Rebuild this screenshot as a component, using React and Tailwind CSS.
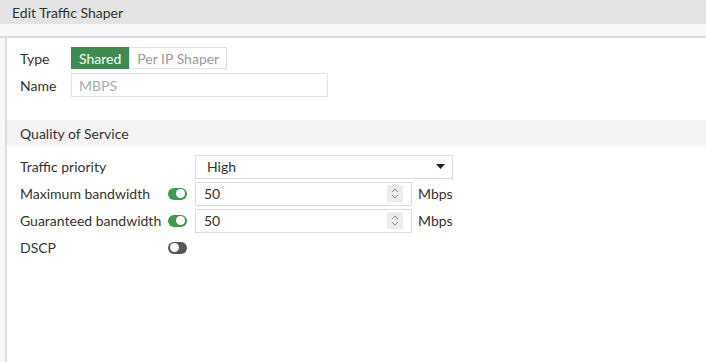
import React from 'react'

function Toggle({ on }) {
  return (
    <div
      className={`w-[19px] h-[12px] rounded-full flex items-center px-[2px] ${
        on ? 'bg-[#3d9a4e] justify-end' : 'bg-[#555] justify-start'
      }`}
    >
      <div className="w-[9px] h-[9px] rounded-full bg-white" />
    </div>
  )
}

function Spinner() {
  return (
    <div className="w-[16px] h-[17px] bg-[#ececec] flex items-center justify-center">
      <svg width="8" height="13" viewBox="0 0 8 13" fill="none" stroke="#8a8a8a" strokeWidth="1">
        <path d="M1 5 L4 2 L7 5" />
        <path d="M1 8 L4 11 L7 8" />
      </svg>
    </div>
  )
}

function BandwidthRow({ label }) {
  return (
    <div className="flex items-center h-[27px]">
      <div className="w-[148px]">{label}</div>
      <div className="w-[27px]">
        <Toggle on />
      </div>
      <div className="w-[217px] h-[24px] border border-[#dcdcdc] flex items-center pl-[8px] pr-[8px] justify-between">
        <span>50</span>
        <Spinner />
      </div>
      <span className="ml-[6px]">Mbps</span>
    </div>
  )
}

export default function App() {
  return (
    <div
      className="w-[706px] h-[362px] bg-[#f8f8f8] text-[14px] text-[#333] flex flex-col overflow-hidden"
      style={{ fontFamily: 'Lato, "Open Sans", sans-serif' }}
    >
      <div className="h-[24px] bg-[#e4e4e4] flex items-center pl-[12px] shrink-0">Edit Traffic Shaper</div>
      <div className="h-[14px] bg-[#f8f8f8] border-b-2 border-[#dedede] shrink-0" />
      <div className="flex-1 ml-[5px] bg-white border-l-2 border-[#dedede]">
        <div className="pl-[13px] pt-[9px]">
          <div className="flex items-center h-[22px]">
            <div className="w-[51px]">Type</div>
            <div className="flex h-[22px]">
              <div className="bg-[#3e8c50] text-white px-[8px] flex items-center">Shared</div>
              <div className="border border-[#e2e2e2] text-[#9a9a9a] px-[7px] flex items-center">Per IP Shaper</div>
            </div>
          </div>
          <div className="flex items-center h-[24px] mt-[4px]">
            <div className="w-[51px]">Name</div>
            <div className="w-[257px] h-[24px] border border-[#e2e2e2] flex items-center pl-[7px] text-[#aaa]">MBPS</div>
          </div>
        </div>
        <div className="mt-[23px] h-[26px] bg-[#f4f4f4] flex items-center pl-[13px]">Quality of Service</div>
        <div className="pl-[13px] pt-[7px]">
          <div className="flex items-center h-[27px]">
            <div className="w-[175px]">Traffic priority</div>
            <div className="w-[258px] h-[24px] border border-[#dcdcdc] flex items-center justify-between pl-[11px] pr-[7px]">
              <span>High</span>
              <svg width="9" height="5" viewBox="0 0 9 5">
                <path d="M0 0 L9 0 L4.5 5 Z" fill="#222" />
              </svg>
            </div>
          </div>
          <BandwidthRow label="Maximum bandwidth" />
          <BandwidthRow label="Guaranteed bandwidth" />
          <div className="flex items-center h-[27px]">
            <div className="w-[148px]">DSCP</div>
            <Toggle on={false} />
          </div>
        </div>
      </div>
    </div>
  )
}
